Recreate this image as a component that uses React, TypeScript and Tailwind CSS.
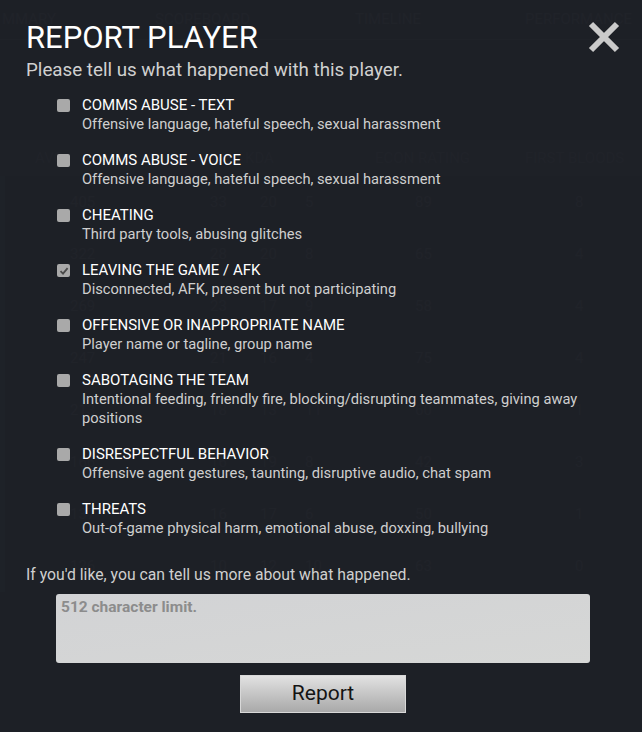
import { useState } from "react";

const reasons = [
  {
    title: "COMMS ABUSE - TEXT",
    description: "Offensive language, hateful speech, sexual harassment",
  },
  {
    title: "COMMS ABUSE - VOICE",
    description: "Offensive language, hateful speech, sexual harassment",
  },
  { title: "CHEATING", description: "Third party tools, abusing glitches" },
  {
    title: "LEAVING THE GAME / AFK",
    description: "Disconnected, AFK, present but not participating",
  },
  {
    title: "OFFENSIVE OR INAPPROPRIATE NAME",
    description: "Player name or tagline, group name",
  },
  {
    title: "SABOTAGING THE TEAM",
    description:
      "Intentional feeding, friendly fire, blocking/disrupting teammates, giving away positions",
  },
  {
    title: "DISRESPECTFUL BEHAVIOR",
    description: "Offensive agent gestures, taunting, disruptive audio, chat spam",
  },
  {
    title: "THREATS",
    description: "Out-of-game physical harm, emotional abuse, doxxing, bullying",
  },
];

// faint scoreboard rows behind the dialog
const rows = [
  ["405", "33", "20", "5", "89", "8"],
  ["322", "28", "20", "8", "65", "4"],
  ["269", "23", "17", "9", "58", "4"],
  ["247", "21", "16", "4", "75", "4"],
  ["213", "18", "13", "11", "60", "1"],
  ["166", "16", "19", "8", "42", "3"],
  ["137", "16", "17", "6", "50", "1"],
  ["126", "10", "12", "10", "63", "0"],
];

function Scoreboard() {
  return (
    <div aria-hidden className="absolute inset-0 text-[15px] text-[#2a2e35]">
      <div className="flex h-[40px] items-center border-b border-[#262a30]">
        <span className="w-[150px] pl-[2px]">MMARY</span>
        <span className="w-[205px] pl-[5px]">SCOREBOARD</span>
        <span className="w-[170px]">TIMELINE</span>
        <span>PERFORMANCE</span>
      </div>
      <div className="mt-[100px] flex h-[36px] items-center bg-[#20242a]">
        <span className="w-[245px] pl-[35px]">AVG</span>
        <span className="w-[130px]">KDA</span>
        <span className="w-[150px]">ECON RATING</span>
        <span>FIRST BLOODS</span>
      </div>
      {rows.map((r, i) => (
        <div
          key={i}
          className="flex h-[52px] items-center border-l-[5px] border-[#22282e]"
        >
          <span className="w-[205px] pl-[65px]">{r[0]}</span>
          <span className="w-[50px]">{r[1]}</span>
          <span className="w-[45px]">{r[2]}</span>
          <span className="w-[110px]">{r[3]}</span>
          <span className="w-[160px]">{r[4]}</span>
          <span>{r[5]}</span>
        </div>
      ))}
    </div>
  );
}

function Checkbox({ checked }: { checked: boolean }) {
  return (
    <div className="mt-[3px] flex h-[13px] w-[13px] shrink-0 items-center justify-center rounded-[2px] bg-[#a9a9a9]">
      {checked && (
        <svg width="10" height="10" viewBox="0 0 10 10">
          <path
            d="M1.5 5.2 L4 7.6 L8.6 2.2"
            fill="none"
            stroke="#4a4a4a"
            strokeWidth="1.8"
          />
        </svg>
      )}
    </div>
  );
}

export default function App() {
  const [selected, setSelected] = useState(3);

  return (
    <div
      className="relative h-[732px] w-[642px] overflow-hidden bg-[#1d2026]"
      style={{ fontFamily: "Roboto, 'Noto Sans', sans-serif" }}
    >
      <Scoreboard />

      <div className="absolute inset-0 flex flex-col bg-[#1e2127]/80 text-[#e6e6e6]">
        <div className="flex items-start justify-between pl-[26px] pr-[22px] pt-[18px]">
          <h1 className="text-[31px] leading-[40px] text-white">
            REPORT PLAYER
          </h1>
          <button className="mt-[3px]">
            <svg width="32" height="32" viewBox="0 0 32 32">
              <path
                d="M3 3 L29 29 M29 3 L3 29"
                stroke="#cacaca"
                strokeWidth="6"
              />
            </svg>
          </button>
        </div>
        <p className="pl-[26px] text-[18.75px] leading-[24px] text-[#d0d0d0]">
          Please tell us what happened with this player.
        </p>

        <div className="mt-[14px] flex flex-col gap-[17px] pl-[57px] pr-[40px]">
          {reasons.map((r, i) => (
            <div
              key={r.title}
              className="flex cursor-pointer gap-[12px]"
              onClick={() => setSelected(i)}
            >
              <Checkbox checked={selected === i} />
              <div className="flex flex-col">
                <span className="text-[15px] leading-[19px] text-white">
                  {r.title}
                </span>
                <span className="text-[14.7px] leading-[19px] text-[#cfcfcf]">
                  {r.description}
                </span>
              </div>
            </div>
          ))}
        </div>

        <p className="mt-[27px] pl-[26px] text-[15.75px] leading-[20px] text-[#cfcfcf]">
          If you&apos;d like, you can tell us more about what happened.
        </p>

        <textarea
          placeholder="512 character limit."
          className="mx-[56px] mt-[9px] h-[69px] w-[534px] resize-none rounded-[3px] bg-gradient-to-br from-[#d2d3d5] to-[#d6d7d6] px-[5px] py-[2px] text-[15.5px] font-bold text-[#555] outline-none placeholder:text-[#8c8c8c]"
        />

        <div className="mt-[12px] flex justify-center pl-[4px]">
          <button className="h-[38px] w-[166px] border border-[#d8d8d8] bg-gradient-to-b from-[#e2e2e2] to-[#a9a9a9] text-[21px] text-[#141414]">
            Report
          </button>
        </div>
      </div>
    </div>
  );
}
